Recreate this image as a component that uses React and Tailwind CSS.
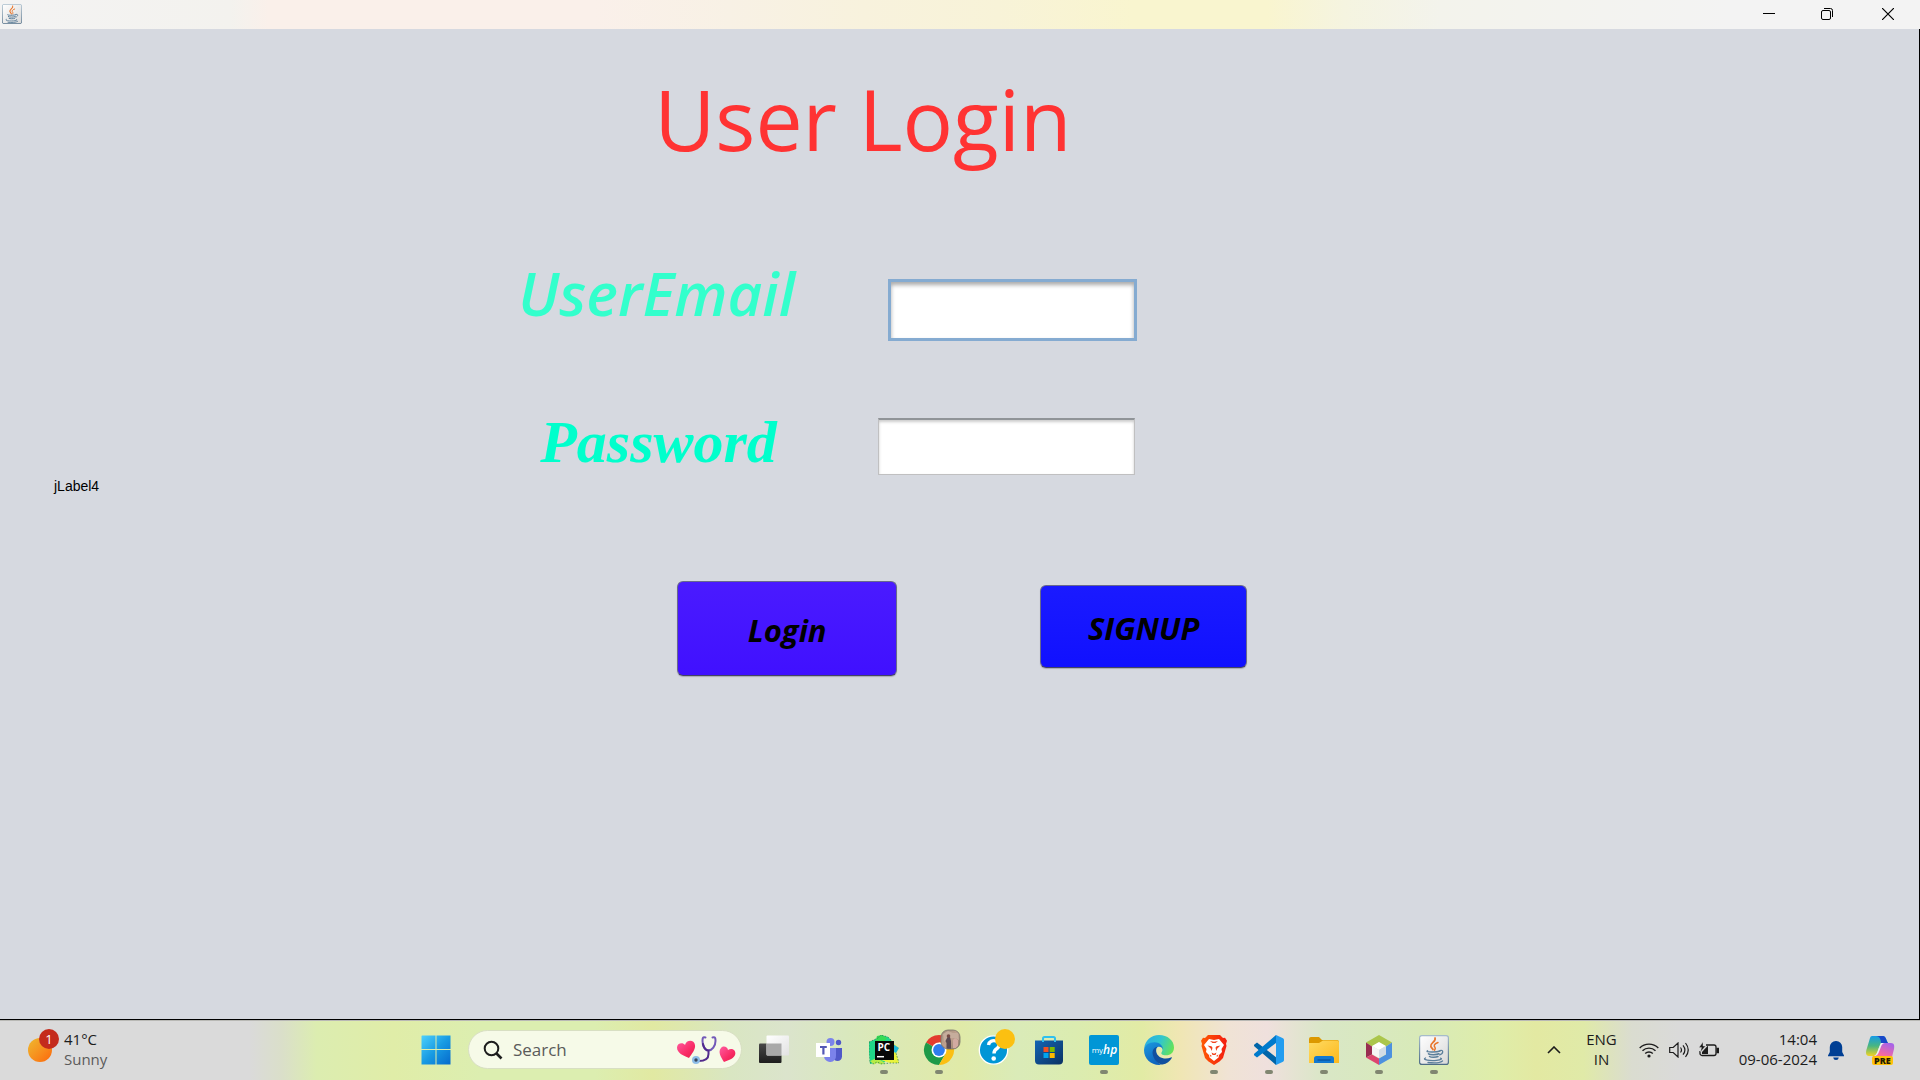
import React from "react";

function JavaIcon({ className }) {
  return (
    <svg viewBox="0 0 30 30" className={className} aria-hidden="true">
      <defs>
        <linearGradient id="javaBg" x1="0" y1="0" x2="1" y2="1">
          <stop offset="0" stopColor="#ffffff" />
          <stop offset="1" stopColor="#d8d8d8" />
        </linearGradient>
        <linearGradient id="javaEdge" x1="0" y1="0" x2="0" y2="1">
          <stop offset="0" stopColor="#a6bccb" />
          <stop offset="1" stopColor="#4d6c86" />
        </linearGradient>
      </defs>
      <rect x="0.6" y="0.6" width="28.8" height="28.8" rx="2.2" fill="url(#javaBg)" stroke="url(#javaEdge)" strokeWidth="1.2" />
      <g fill="none" strokeLinecap="round">
        <path d="M16 3c1.500 3.500-5 5-4.200 8.200.3 1.400 1.700 2.300 2.200 3.300" stroke="#e8762c" strokeWidth="1.700" />
        <path d="M19 7.500c-4 1.500-4.500 3.200-3 5 .7 1 .3 1.800-.5 2.700" stroke="#e8762c" strokeWidth="1.500" />
        <path d="M8.500 15.800c-2.500 1.400 9 1.600 12.500.2M9.500 18.800c1.500 1.200 8 1.200 10.500 0M10.500 21.500c1.500 1 6.500 1 8.500 0" stroke="#5b7e9a" strokeWidth="1.500" />
        <path d="M21 15.500c3.500-1 3.800 2.800-.3 4.400M6.500 23c-4 1.800 5 3 11 2.300 5-.5 6-1.500 4-2.200M9 27.500c6 .8 12 .3 14.500-1.500" stroke="#5b7e9a" strokeWidth="1.300" />
      </g>
    </svg>
  );
}

function WindowsIcon() {
  return (
    <svg viewBox="0 0 30 30" className="size-[30px]" aria-hidden="true">
      <defs>
        <linearGradient id="winBlue" gradientUnits="userSpaceOnUse" x1="0" y1="0" x2="30" y2="30">
          <stop offset="0" stopColor="#4fd2fd" />
          <stop offset="0.500" stopColor="#189be3" />
          <stop offset="1" stopColor="#0568cb" />
        </linearGradient>
      </defs>
      <g fill="url(#winBlue)">
        <path d="M1 .5h13.500V14H.5V1zM15.500.5H29.500V14h-14zM.5 15h14v14.500H.5zM15.500 15h14v14.500h-14z" />
      </g>
    </svg>
  );
}

function HealthArt() {
  return (
    <svg viewBox="0 0 62 30" className="h-[30px] w-[62px]" aria-hidden="true">
      <defs>
        <linearGradient id="heart" x1="0" y1="0" x2="1" y2="1">
          <stop offset="0" stopColor="#ff5ca0" />
          <stop offset="0.600" stopColor="#f92b66" />
          <stop offset="1" stopColor="#e31f48" />
        </linearGradient>
      </defs>
      <path d="M14 23C8 20.500 2 18 2 12.500 2 8 8 7 10 10c1-5 9-6 10 0 .8 4.500-3.500 9-6 13z" fill="url(#heart)" />
      <path d="M49 27c-3-5-6.500-10-3-14 2.500-2.800 6.500-1 7 2 3-2.500 8-.5 7.300 4C59.500 23.500 54 25 49 27z" fill="url(#heart)" />
      <g fill="none" strokeWidth="2" strokeLinecap="round">
        <path d="M30.500 2.500c-3-1-3 1-3 3.500 0 5 2.500 9.500 6 9.500s7-4.500 7-9.500c0-2.500 0-4.500-3-3.500" stroke="#7259b8" />
        <path d="M28 9c.5 3.500 3 6.500 5.500 6.500V19c0 5-3 7-10 7" stroke="#522b8c" />
      </g>
      <circle cx="21" cy="25" r="4" fill="#8dbde8" />
      <circle cx="21" cy="25" r="1.700" fill="#37465a" />
    </svg>
  );
}

function TaskViewIcon() {
  return (
    <svg viewBox="0 0 30 30" className="size-[30px]" aria-hidden="true">
      <defs>
        <linearGradient id="tvDark" x1="0" y1="0" x2="0" y2="1"><stop offset="0" stopColor="#484848" /><stop offset="1" stopColor="#1d1d1d" /></linearGradient>
        <linearGradient id="tvLight" x1="0" y1="0" x2="1" y2="1"><stop offset="0" stopColor="#ffffff" /><stop offset="1" stopColor="#e2e2e2" /></linearGradient>
      </defs>
      <rect x="0" y="8.500" width="22.500" height="19.500" rx="1" fill="url(#tvDark)" />
      <rect x="7.500" y="0.500" width="22.500" height="20" rx="1" fill="url(#tvLight)" />
      <path d="M7.500 8.500h15v12H8.500a1 1 0 0 1-1-1z" fill="#a9a9a9" />
    </svg>
  );
}

function TeamsIcon() {
  return (
    <svg viewBox="0 0 30 30" className="size-[30px]" aria-hidden="true">
      <circle cx="16.500" cy="7" r="4" fill="#7b83eb" />
      <circle cx="24.500" cy="7.500" r="2.700" fill="#5059c9" />
      <path d="M19 13h9v8.500a4.500 4.500 0 0 1-9 0z" fill="#5059c9" />
      <path d="M10 13h12v7.500a6 6 0 0 1-12 1z" fill="#7b83eb" />
      <path d="M12 8h4v14h-5z" fill="#4b53a8" opacity=".35" />
      <rect x="2" y="8" width="14" height="14" fill="#ffffff" />
      <path d="M6 11h6.800v2h-2.300v6.500H8.300V13H6z" fill="#5358b5" />
    </svg>
  );
}

function PyCharmIcon() {
  return (
    <span className="relative block size-[30px]">
      <svg viewBox="0 0 30 30" className="size-[30px]" aria-hidden="true">
        <path d="M0 7l9-4 3-3 7 2 5 5v10L14 29 9 27 1 29 0 18z" fill="#21d789" />
        <path d="M8 1l5-1 5 3-4 5H6z" fill="#36db55" />
        <path d="M24 8l6 5-3 5 3 10-9 0-9-3 10-8z" fill="#e9f33d" />
        <path d="M24 9l6 4-3 5-4-2z" fill="#1cb9dc" />
        <path d="M1 26l7-3 8 5-4 1.500-4-1.500-3 1.500z" fill="#b7eb47" />
        <path d="M0 7l9-4 3-3 7 2 5 5M0 7v20l4 2 4-2 5 2 8-1 9 0-3-10" fill="none" stroke="#23774f" strokeWidth=".7" strokeDasharray="1.500 1.500" />
        <rect x="6" y="6" width="19" height="19" fill="#080808" />
        <path d="M8 21.700h7" stroke="#fff" strokeWidth="1.500" />
      </svg>
      <span className="absolute left-2 top-1 font-['Open_Sans'] text-[10px] font-bold leading-4 text-white">PC</span>
    </span>
  );
}

function ChromeIcon() {
  return (
    <svg viewBox="0 0 30 30" className="size-[30px] overflow-visible" aria-hidden="true">
      <defs>
        <linearGradient id="avatar" x1="0" y1="0" x2="1" y2="1"><stop offset="0" stopColor="#9d8c78" /><stop offset="0.500" stopColor="#bfa08e" /><stop offset="1" stopColor="#8b7a67" /></linearGradient>
        <clipPath id="avatarClip"><rect x="17" y="-5" width="19" height="19" rx="7" /></clipPath>
      </defs>
      <path d="M15 15L2 7.500A15 15 0 0 1 28 7.500H15z" fill="#e33b2e" />
      <path d="M15 15L21.500 18.750 15 30A15 15 0 0 1 2 7.500z" fill="#1e9a48" />
      <path d="M15 7.500h13A15 15 0 0 1 15 30l6.500-11.250z" fill="#fbbf12" />
      <circle cx="15" cy="15" r="7.500" fill="#fff" />
      <circle cx="15" cy="15" r="5.900" fill="#2f7cee" />
      <g clipPath="url(#avatarClip)">
        <rect x="17" y="-5" width="19" height="19" fill="url(#avatar)" />
        <path d="M19-1l5-3 5 2 5 0 1 7-4-2-7 0-4 4z" fill="#c6ad9c" />
        <path d="M22.500 14V8l-1-2 2-4 2.500 0 1 4v8z" fill="#5a4a52" />
        <circle cx="24.500" cy="1" r="1.800" fill="#754b45" />
        <path d="M29 13V5l2-2 3 2v6l-3 3z" fill="#d2aaa1" />
      </g>
      <rect x="17" y="-5" width="19" height="19" rx="7" fill="none" stroke="#77746a" strokeWidth=".8" />
    </svg>
  );
}

function HelpIcon() {
  return (
    <svg viewBox="0 0 30 30" className="size-[30px] overflow-visible" aria-hidden="true">
      <circle cx="14.500" cy="15" r="14.200" fill="#0096d6" stroke="#fff" strokeWidth="1.300" />
      <path d="M9.500 10c.5-3.500 4-5.200 7.500-4 4 1.500 3.800 5.500 1 7.500-2 1.300-3 2-3 5" fill="none" stroke="#fff" strokeWidth="3.400" />
      <circle cx="14.700" cy="23.500" r="2.300" fill="#fff" />
      <circle cx="26" cy="4" r="10" fill="#fcc011" />
    </svg>
  );
}

function StoreIcon() {
  return (
    <svg viewBox="0 0 30 30" className="size-[30px]" aria-hidden="true">
      <defs><linearGradient id="store" x1="0" y1="0" x2="1" y2="1"><stop offset="0" stopColor="#1364b4" /><stop offset="1" stopColor="#0c3263" /></linearGradient></defs>
      <path d="M1 5.500h28v20a4 4 0 0 1-4 4H5a4 4 0 0 1-4-4z" fill="url(#store)" />
      <path d="M9 7V3.500A1.500 1.500 0 0 1 10.500 2h9A1.500 1.500 0 0 1 21 3.500V7" fill="none" stroke="#2fc0ee" strokeWidth="2" />
      <path d="M9.500 12h5v5h-5z" fill="#f25022" />
      <path d="M15.700 12h5v5h-5z" fill="#7fba00" />
      <path d="M9.500 18h5v5h-5z" fill="#00a4ef" />
      <path d="M15.700 18h5v5h-5z" fill="#ffb900" />
    </svg>
  );
}

function MyHpIcon() {
  return (
    <span className="flex size-[30px] items-center justify-center rounded-xs bg-[#0096d6] font-['Open_Sans'] leading-none text-white">
      <span className="text-[8px]">my</span>
      <span className="text-[12px] font-semibold italic">hp</span>
    </span>
  );
}

function EdgeIcon() {
  return (
    <svg viewBox="0 0 30 30" className="size-[30px]" aria-hidden="true">
      <defs>
        <linearGradient id="edgeTop" x1="0" y1="0.300" x2="1" y2="0.600"><stop offset="0" stopColor="#2baee3" /><stop offset="0.500" stopColor="#31c6cd" /><stop offset="1" stopColor="#66e455" /></linearGradient>
        <linearGradient id="edgeMid" x1="0" y1="0" x2="0.500" y2="1"><stop offset="0" stopColor="#1b9ae0" /><stop offset="1" stopColor="#0f64bd" /></linearGradient>
      </defs>
      <path d="M.2 13.500C1 5.500 7 0 15 0c8.500 0 15 5.500 15 12.500 0 5-3.500 7.800-8 7.800-4 0-5.500-1.500-4.300-3 2.500-4-1-9.300-7.200-9.300C5 8 1.500 10.500.2 13.500z" fill="url(#edgeTop)" />
      <path d="M0 15C.3 10 5 7.200 10.500 7.200c5.500 0 8.800 4 8.300 7.600-.5-2.300-2.500-3.300-5-2.800-6 2-5 13 3.500 17.800C8 31 0 24.500 0 15z" fill="url(#edgeMid)" />
      <path d="M13.500 11.800C8 13 7.500 18 10 23c2 4 5.500 6.500 8.500 6.600 4.200-.8 7.500-3.200 9.300-6.600.4-.8-.2-1-.9-.6-6.500 3-13.900-.3-14.700-6-.2-1.800.2-3.500 1.300-4.600z" fill="#11509f" />
    </svg>
  );
}

function BraveIcon() {
  return (
    <svg viewBox="0 0 30 30" className="size-[30px]" aria-hidden="true">
      <defs><linearGradient id="brave" x1="0" y1="0" x2="1" y2="0"><stop offset="0" stopColor="#ff5b05" /><stop offset="1" stopColor="#f31c10" /></linearGradient></defs>
      <path d="M9 0h12l3 3 2-.3 2 3-1 3L27.500 11l-3.500 12-3.500 3.500L15 30l-5.500-3.500L6 23 2.500 11 3 8.700 2 5.700l2-3L6 3z" fill="url(#brave)" />
      <path d="M10 4l5 1 5-1 5 6-2.500 4 .5 3-3 3-.5 2.500L15 26l-4.500-3.500L10 20l-3-3 .5-3L5 10z" fill="#fff" />
      <path d="M8.500 10.500l4 .7 1 1.500-.8 3.300-1-2.500zM21.500 10.500l-4 .7-1 1.500.8 3.300 1-2.500zM11 6l4 .8 4-.8-2.500 2h-3z" fill="#f1421d" />
      <path d="M12.500 17.500l2.500 1.300 2.500-1.300-1 2.500h-3zM10.500 19.500l2 1-.5 1.800zM19.500 19.500l-2 1 .5 1.800z" fill="#f1421d" />
    </svg>
  );
}

function CodeIcon() {
  return (
    <svg viewBox="0 0 30 30" className="size-[30px]" aria-hidden="true">
      <path d="M.4 9.500L3 7.500 22 22.200V30L.5 11.400a1.300 1.300 0 0 1-.1-1.900z" fill="#0065a9" />
      <path d="M.5 18.600L22 0v8L3 22.500.4 20.500a1.300 1.300 0 0 1 .1-1.900z" fill="#007acc" />
      <path d="M22 0l7 3.200a2 2 0 0 1 1 1.700v20.200a2 2 0 0 1-1 1.700L22 30z" fill="#239df0" />
    </svg>
  );
}

function FolderIcon() {
  return (
    <svg viewBox="0 0 30 30" className="size-[30px]" aria-hidden="true">
      <defs><linearGradient id="folder" x1="0" y1="0" x2="1" y2="1"><stop offset="0" stopColor="#ffdb63" /><stop offset="1" stopColor="#fcb81c" /></linearGradient></defs>
      <path d="M0 4a2 2 0 0 1 2-2h8l3 3h15a2 2 0 0 1 2 2v5H0z" fill="#dc9800" />
      <path d="M0 8h10l4-2.500h14a2 2 0 0 1 2 2V28H0z" fill="url(#folder)" />
      <path d="M5 28v-4.500A2.500 2.500 0 0 1 7.500 21h15a2.500 2.500 0 0 1 2.500 2.500V28z" fill="#1379d0" />
      <path d="M8.500 25h13" stroke="#0a57a2" strokeWidth="1.400" />
    </svg>
  );
}

function NetBeansIcon() {
  return (
    <svg viewBox="0 0 30 30" className="size-[30px]" aria-hidden="true">
      <path d="M15 0l13 7.500-6 4-7-4-7 4-6-4z" fill="#abc64b" />
      <path d="M2 7.500l6 4v8l-6 3z" fill="#982d50" />
      <path d="M2 22.500l6-3 7 4V30z" fill="#dc4570" />
      <path d="M28 7.500v15L15 30v-6.500l7-4v-8z" fill="#4d91df" />
      <path d="M8 11l7-4 7 4-7 4z" fill="#fff" />
      <path d="M8 11l7 4v8l-7-4z" fill="#f5f5f6" />
      <path d="M22 11l-7 4v8l7-4z" fill="#d4dde6" />
    </svg>
  );
}

function CopilotIcon() {
  return (
    <svg viewBox="0 0 30 28" className="h-[28px] w-[30px]" aria-hidden="true">
      <defs>
        <linearGradient id="cpA" x1="0" y1="0" x2="0" y2="1"><stop offset="0" stopColor="#159ce6" /><stop offset="0.500" stopColor="#49b681" /><stop offset="1" stopColor="#f3d422" /></linearGradient>
        <linearGradient id="cpB" x1="0.700" y1="0" x2="0.300" y2="1"><stop offset="0" stopColor="#a763e8" /><stop offset="0.600" stopColor="#f76aa0" /><stop offset="1" stopColor="#fb9a59" /></linearGradient>
      </defs>
      <path d="M7 0h11c3 0 3 4 5 7h-7c-3 4-3 13-7 13H4C.5 20 .5 16 2 12L5 2q.5-2 2-2z" fill="url(#cpA)" />
      <path d="M14 0h4c3 0 3 4 5 7h-7c0-3-1-7-5-7z" fill="#1948c8" />
      <path d="M19 7h7c3.500 0 3.500 3 3 6l-2 8q-1 6-4 6H12c-3 0-3-4-4-7 4 0 5-3 7-9q1.500-4 4-4z" fill="url(#cpB)" />
      <path d="M16 7h4q-3 0-4.500 5l-2 5q-1.200 3-4.500 3 2.500-1 4-6z" fill="#eef0f2" />
    </svg>
  );
}

const APPS = [
  { name: "Task view", Icon: TaskViewIcon },
  { name: "Microsoft Teams", Icon: TeamsIcon },
  { name: "PyCharm", Icon: PyCharmIcon, open: true },
  { name: "Chrome", Icon: ChromeIcon, open: true },
  { name: "HP Support", Icon: HelpIcon },
  { name: "Microsoft Store", Icon: StoreIcon },
  { name: "myHP", Icon: MyHpIcon, open: true },
  { name: "Edge", Icon: EdgeIcon },
  { name: "Brave", Icon: BraveIcon, open: true },
  { name: "Visual Studio Code", Icon: CodeIcon, open: true },
  { name: "File Explorer", Icon: FolderIcon, open: true },
  { name: "NetBeans", Icon: NetBeansIcon, open: true },
  { name: "Java", Icon: () => <JavaIcon className="size-[30px]" />, open: true },
];

function TitleBar() {
  return (
    <header className="flex h-[29px] items-center bg-[linear-gradient(90deg,#f3f3f3_0%,#f3f2ee_12%,#faf0ea_14%,#faf0ea_31%,#f8f1e5_38%,#f8f2dd_45%,#f8f3d8_52%,#f9f5cf_59%,#f9f5cf_66%,#f5f4e0_70%,#f3f3ec_75%,#f3f3f3_90%)] pb-px">
      <JavaIcon className="ml-0.5 size-5" />
      <div className="ml-auto flex h-full">
        <button type="button" aria-label="Minimize" className="flex w-[58px] items-center justify-center">
          <svg viewBox="0 0 12 12" className="size-3"><path d="M0 5.500h12" stroke="#000" /></svg>
        </button>
        <button type="button" aria-label="Restore" className="flex w-[58px] items-center justify-center">
          <svg viewBox="0 0 12 12" className="size-3" fill="none" stroke="#000">
            <rect x="0.500" y="2.500" width="9" height="9" rx="1.500" />
            <path d="M3 .5h6.500a2 2 0 0 1 2 2V9" />
          </svg>
        </button>
        <button type="button" aria-label="Close" className="flex w-16 items-center justify-center">
          <svg viewBox="0 0 12 12" className="size-3" stroke="#000" strokeWidth="1.200"><path d="M0 0l12 12M12 0L0 12" /></svg>
        </button>
      </div>
    </header>
  );
}

function LoginForm() {
  return (
    <form onSubmit={(e) => e.preventDefault()} className="pt-[38px]">
      <h1 className="pl-[136px] font-['Open_Sans',sans-serif] text-[84px] leading-[104px] text-[#ff3333]">User Login</h1>
      <div className="mt-[74px] flex items-start">
        <label htmlFor="email" className="w-[370px] font-['Open_Sans',sans-serif] text-[60px] font-semibold italic leading-[96px] text-[#33ffcc]">UserEmail</label>
        <input id="email" type="text" className="mt-[34px] h-[62px] w-[249px] border-3 border-[#85abd1] bg-white px-2 text-xl shadow-[inset_0_3px_4px_#aaa] outline-none" />
      </div>
      <div className="mt-[53px] flex items-start">
        <label htmlFor="password" className="w-[360px] pl-[22px] font-['Liberation_Serif',serif] text-[60px] font-bold italic leading-[96px] text-[#00ffcc]">Password</label>
        <input id="password" type="password" className="mt-6 h-[57px] w-[257px] border border-[#c0c0c1] border-t-2 border-t-[#909498] bg-white px-2 text-xl shadow-[inset_0_2px_3px_#ccc] outline-none" />
      </div>
      <div className="mt-[91px] flex items-start gap-[143px] pl-[159px] font-['Open_Sans',sans-serif] text-[31px] font-bold italic text-black">
        <button type="submit" className="h-[95px] w-[220px] rounded-md border border-[#69698c] border-b-[#444466] bg-linear-to-b from-[#4a1aff] to-[#4010ff] pt-1 shadow-[0_1px_1px_#aaaab4]">Login</button>
        <button type="button" className="mt-1 h-[83px] w-[207px] rounded-md border border-[#69698c] border-b-[#444466] bg-linear-to-b from-[#1a1aff] to-[#1010ff] pt-1 shadow-[0_1px_1px_#aaaab4]">SIGNUP</button>
      </div>
    </form>
  );
}

function Taskbar() {
  return (
    <footer className="flex h-[60px] items-center border-t border-[#b9b9b5] bg-[linear-gradient(90deg,#dadada_0%,#dadada_13%,#dadfc9_14.700%,#dcedb0_16.500%,#e0eda8_20.500%,#dceeb0_25%,#dceeb0_31%,#e1e9a2_34%,#d9e6c2_38%,#dbe4cc_41%,#d9e8be_44%,#e0eaa8_50%,#daebb8_53%,#dbecb0_56%,#e2eba5_59.500%,#f0e6b4_61.500%,#f0e3d5_64%,#efe0dd_66%,#d9e7c6_69%,#d8eab8_74%,#dfeda9_78%,#e3e9a2_80%,#e0eaa8_82.500%,#dadcd0_85%,#dadada_87.500%)] pb-0.5 font-['Open_Sans',sans-serif] text-[15px] leading-5 text-[#1c1c1c]">
      <div className="flex w-[21.300%] items-center pl-7">
        <span className="relative block size-6 rounded-full bg-linear-to-br from-[#edb92f] to-[#fb6509]">
          <span className="absolute -top-[9px] left-[11px] flex size-5 items-center justify-center rounded-full bg-[#c42b1c] text-[13px] text-white">1</span>
        </span>
        <p className="ml-3 pb-0.5">41°C<br /><span className="text-[#5b5b5b]">Sunny</span></p>
      </div>
      <button type="button" aria-label="Start" className="flex w-[55px] justify-center"><WindowsIcon /></button>
      <label className="ml-1 flex h-[39px] w-[274px] items-center rounded-full border border-[#d8dfc3] bg-[#f6fae8] pl-3.5 pr-1">
        <svg viewBox="0 0 20 20" className="size-5 shrink-0" fill="none" stroke="#1d1d1d" strokeWidth="2" aria-hidden="true">
          <circle cx="8.500" cy="8.500" r="6.800" /><path d="M13.500 13.500l5 5" strokeWidth="2.600" />
        </svg>
        <input type="text" aria-label="Search" placeholder="Search" className="ml-2.5 w-0 flex-1 bg-transparent text-[17px] outline-none placeholder:text-[#5a5a5a]" />
        <HealthArt />
      </label>
      <nav className="ml-[5px] flex">
        {APPS.map(({ name, Icon, open }) => (
          <button key={name} type="button" aria-label={name} className="relative flex h-[57px] w-[55px] items-center justify-center">
            <Icon />
            {open && <span className="absolute bottom-1 h-1 w-2 rounded-full bg-[#808671]" />}
          </button>
        ))}
      </nav>
      <div className="ml-auto flex items-center pr-[25px]">
        <button type="button" aria-label="Show hidden icons" className="mr-[25px]">
          <svg viewBox="0 0 14 8" className="h-2 w-3.5" fill="none" stroke="#1c1c1c" strokeWidth="1.600"><path d="M1 7l6-6 6 6" /></svg>
        </button>
        <p className="pb-0.5 text-center">ENG<br />IN</p>
        <div className="ml-[22px] flex items-center gap-2.5">
          <svg viewBox="0 0 20 16" className="h-4 w-5" fill="none" stroke="#1c1c1c" strokeWidth="1.400" aria-label="Wi-Fi">
            <path d="M.7 6a13 13 0 0 1 18.600 0M3.500 8.800a9.200 9.200 0 0 1 13 0M6.200 11.500a5.400 5.400 0 0 1 7.600 0" /><circle cx="10" cy="14" r="1.600" fill="#1c1c1c" stroke="none" />
          </svg>
          <svg viewBox="0 0 20 16" className="h-4 w-5" fill="none" stroke="#1c1c1c" strokeWidth="1.200" aria-label="Volume">
            <path d="M.7 5.500h3.500L9 1v14l-4.800-4.500H.7zM11.500 5.500q2 2.500 0 5M14 3.300q3.800 4.700 0 9.400M16.500 1q5.500 7 0 14" />
          </svg>
          <svg viewBox="0 0 20 16" className="h-4 w-5" fill="none" stroke="#1c1c1c" strokeWidth="1.300" aria-label="Battery">
            <path d="M7 3h8a2 2 0 0 1 2 2v6.500a2 2 0 0 1-2 2H3a2 2 0 0 1-2-2V9" /><path d="M18 6.500v4h1.500v-4z" fill="#1c1c1c" /><path d="M3 12V10l6-6.500V12z" fill="#1c1c1c" stroke="none" /><path d="M4 0L0 5.500h2.500L1.500 10 6.500 4H4z" fill="#1c1c1c" stroke="#dadada" strokeWidth=".4" />
          </svg>
        </div>
        <p className="ml-5 pb-0.5 text-right">14:04<br />09-06-2024</p>
        <svg viewBox="0 0 16 20" className="ml-[11px] h-5 w-4" fill="#003f94" aria-label="Notifications">
          <path d="M8 1a6 6 0 0 1 6.200 6v5L16 15.500v.7H0v-.7L1.800 12V7A6 6 0 0 1 8 1zM5.200 17.500h5.600Q10.500 20 8 20t-2.800-2.500z" />
        </svg>
        <button type="button" aria-label="Copilot" className="relative ml-[21px]">
          <CopilotIcon />
          <span className="absolute -bottom-px left-[7px] rounded-xs bg-[#ffc20a] px-0.5 text-[9px] font-extrabold leading-[9px] text-[#241c00]">PRE</span>
        </button>
      </div>
    </footer>
  );
}

export default function App() {
  return (
    <div className="flex min-h-screen flex-col">
      <TitleBar />
      <main className="grid flex-1 grid-cols-[27%_1fr] border-b border-r border-black bg-[#d6d9e0]">
        <p className="pl-[54px] pt-[447px] font-['Liberation_Sans',sans-serif] text-[14px] leading-5 text-black">jLabel4</p>
        <LoginForm />
      </main>
      <Taskbar />
    </div>
  );
}
